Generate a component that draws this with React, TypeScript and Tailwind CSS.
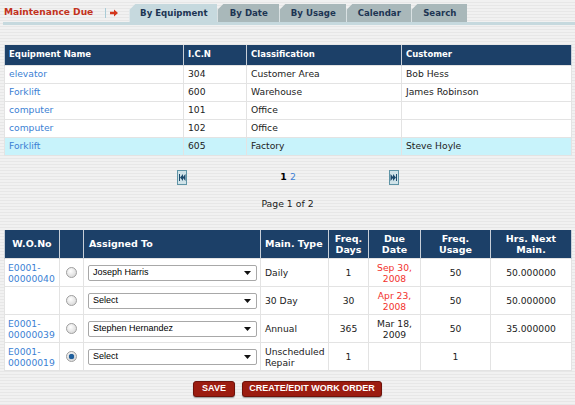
import React from "react";

const stripes =
  "bg-[repeating-linear-gradient(to_bottom,#f1f1f1_0px,#f1f1f1_2px,#e7e7e7_2px,#e7e7e7_3px)]";

const tabs = [
  { label: "By Equipment", w: "w-[88px]", active: true },
  { label: "By Date", w: "w-[62px]" },
  { label: "By Usage", w: "w-[67px]" },
  { label: "Calendar", w: "w-[65px]" },
  { label: "Search", w: "w-[56px]" },
];

const equipment = [
  { name: "elevator", icn: "304", cls: "Customer Area", customer: "Bob Hess" },
  { name: "Forklift", icn: "600", cls: "Warehouse", customer: "James Robinson" },
  { name: "computer", icn: "101", cls: "Office", customer: "" },
  { name: "computer", icn: "102", cls: "Office", customer: "" },
  { name: "Forklift", icn: "605", cls: "Factory", customer: "Steve Hoyle", hl: true },
];

const orders = [
  { wo: "E0001-00000040", who: "Joseph Harris", type: "Daily", days: "1", due: ["Sep 30,", "2008"], late: true, usage: "50", hrs: "50.000000" },
  { wo: "", who: "Select", type: "30 Day", days: "30", due: ["Apr 23,", "2008"], late: true, usage: "50", hrs: "50.000000" },
  { wo: "E0001-00000039", who: "Stephen Hernandez", type: "Annual", days: "365", due: ["Mar 18,", "2009"], usage: "50", hrs: "35.000000" },
  { wo: "E0001-00000019", who: "Select", type: "Unscheduled Repair", days: "1", due: [], usage: "1", hrs: "", checked: true },
];

function PageIcon({ dir }: { dir: "first" | "last" }) {
  return (
    <svg width="10" height="15" viewBox="0 0 10 15">
      <rect x="0.5" y="0.5" width="9" height="14" fill="#cfe2e8" stroke="#5f94a6" />
      {dir === "first" ? (
        <g fill="#1d4a6c">
          <rect x="2" y="4" width="1" height="7" />
          <polygon points="6,4 3,7.5 6,11" />
          <polygon points="8.5,4 5.5,7.5 8.5,11" />
        </g>
      ) : (
        <g fill="#1d4a6c">
          <rect x="7" y="4" width="1" height="7" />
          <polygon points="4,4 7,7.5 4,11" />
          <polygon points="1.5,4 4.5,7.5 1.5,11" />
        </g>
      )}
    </svg>
  );
}

function Radio({ checked }: { checked?: boolean }) {
  return (
    <span className="mx-auto flex h-[11px] w-[11px] items-center justify-center rounded-full border border-[#a0a0a0] bg-[radial-gradient(circle_at_40%_35%,#ffffff,#cfcfcf)]">
      {checked && <span className="h-[5px] w-[5px] rounded-full bg-[#1d5f9e] shadow-[0_0_1px_#0a3a6a]" />}
    </span>
  );
}

function Select({ value }: { value: string }) {
  return (
    <div className="flex h-[16px] w-[169px] items-center justify-between rounded-[2px] border border-[#a8a8a8] bg-white pl-[4px] pr-[5px] font-['Liberation_Sans',Arial,sans-serif] text-[9px] text-black">
      <span>{value}</span>
      <svg width="7" height="4" viewBox="0 0 7 4">
        <polygon points="0,0 7,0 3.5,4" fill="#111" />
      </svg>
    </div>
  );
}

export default function App() {
  return (
    <div className={`h-[405px] w-[575px] overflow-hidden ${stripes} font-['DejaVu_Sans',Verdana,sans-serif]`}>
      {/* tab strip */}
      <div className="ml-[3px] flex h-[25px] items-stretch border-b-[3px] border-[#c6d9de]">
        <div className="flex items-center pl-[1px] pt-[3px]">
          <span className="text-[9.1px] font-bold text-[#c3321c]">Maintenance Due</span>
          <span className="ml-[12px] h-[10px] w-[1px] bg-[#a9cbd6]" />
          <svg className="ml-[4px]" width="8" height="8" viewBox="0 0 8 8">
            <polygon points="0,2.8 4,2.8 4,0.5 8,4 4,7.5 4,5.2 0,5.2" fill="#d3361c" />
          </svg>
        </div>
        <div className="ml-[11px] flex items-end">
          {tabs.map((t) => (
            <div
              key={t.label}
              className={`${t.w} flex h-[18px] items-center justify-center border-l border-[#e4ecee] text-[8.6px] font-bold text-[#1d3553] [clip-path:polygon(6px_0,100%_0,100%_100%,0_100%,0_6px)] ${
                t.active ? "bg-[#c6d9de]" : "bg-[#a9b8ba]"
              }`}
            >
              {t.label}
            </div>
          ))}
        </div>
      </div>

      {/* equipment table */}
      <table className="ml-[4px] mt-[20px] w-[567px] table-fixed border-collapse text-[9.2px] text-[#222]">
        <colgroup>
          <col className="w-[179px]" />
          <col className="w-[63px]" />
          <col className="w-[155px]" />
          <col className="w-[170px]" />
        </colgroup>
        <thead>
          <tr className="h-[20px] bg-[#1c4068] text-left text-[8.5px] font-bold text-white">
            {["Equipment Name", "I.C.N", "Classification", "Customer"].map((h) => (
              <th key={h} className="border-x border-[#c7cfd8] pl-[4px] font-bold">
                {h}
              </th>
            ))}
          </tr>
        </thead>
        <tbody>
          {equipment.map((r, i) => (
            <tr key={i} className={`h-[18px] ${r.hl ? "bg-[#c8f3fb]" : "bg-white"}`}>
              <td className="border border-[#e3e3e3] pl-[4px] text-[#3b7fd4]">{r.name}</td>
              <td className="border border-[#e3e3e3] pl-[4px]">{r.icn}</td>
              <td className="border border-[#e3e3e3] pl-[4px]">{r.cls}</td>
              <td className="border border-[#e3e3e3] pl-[4px]">{r.customer}</td>
            </tr>
          ))}
        </tbody>
      </table>

      {/* pagination */}
      <div className="mt-[14px] flex justify-center pl-[1px]">
        <div className="flex h-[15px] w-[223px] items-center justify-between">
          <PageIcon dir="first" />
          <span className="text-[9.3px] font-bold text-black">
            1 <span className="font-normal text-[#3b7fd4]">2</span>
          </span>
          <PageIcon dir="last" />
        </div>
      </div>
      <div className="mt-[13px] text-center text-[9.3px] leading-[12px] text-[#222]">Page 1 of 2</div>

      {/* work orders */}
      <table className="ml-[4px] mt-[20px] w-[567px] table-fixed border-collapse text-[9.2px] text-[#222]">
        <colgroup>
          <col className="w-[55px]" />
          <col className="w-[24px]" />
          <col className="w-[177px]" />
          <col className="w-[68px]" />
          <col className="w-[40px]" />
          <col className="w-[52px]" />
          <col className="w-[70px]" />
          <col className="w-[81px]" />
        </colgroup>
        <thead>
          <tr className="h-[29px] bg-[#1c4068] text-[9.5px] font-bold leading-[11px] text-white">
            <th className="border-x border-[#c7cfd8] text-center">W.O.No</th>
            <th className="border-x border-[#c7cfd8]" />
            <th className="border-x border-[#c7cfd8] pl-[5px] text-left">Assigned To</th>
            <th className="border-x border-[#c7cfd8] pl-[4px] text-left">Main. Type</th>
            <th className="border-x border-[#c7cfd8] text-center">
              Freq.
              <br />
              Days
            </th>
            <th className="border-x border-[#c7cfd8] text-center">
              Due
              <br />
              Date
            </th>
            <th className="border-x border-[#c7cfd8] text-center">
              Freq.
              <br />
              Usage
            </th>
            <th className="border-x border-[#c7cfd8] text-center">
              Hrs. Next
              <br />
              Main.
            </th>
          </tr>
        </thead>
        <tbody>
          {orders.map((r, i) => (
            <tr key={i} className="h-[28px] bg-white leading-[11px]">
              <td className="border border-[#e3e3e3] pl-[3px] text-[#3b7fd4]">
                {r.wo && (
                  <>
                    {r.wo.split("-")[0]}-
                    <br />
                    {r.wo.split("-")[1]}
                  </>
                )}
              </td>
              <td className="border border-[#e3e3e3]">
                <Radio checked={r.checked} />
              </td>
              <td className="border border-[#e3e3e3] pl-[4px]">
                <Select value={r.who} />
              </td>
              <td className="border border-[#e3e3e3] pl-[4px]">{r.type}</td>
              <td className="border border-[#e3e3e3] text-center">{r.days}</td>
              <td className={`border border-[#e3e3e3] text-center ${r.late ? "text-[#f2312d]" : ""}`}>
                {r.due.length > 0 && (
                  <>
                    {r.due[0]}
                    <br />
                    {r.due[1]}
                  </>
                )}
              </td>
              <td className="border border-[#e3e3e3] text-center">{r.usage}</td>
              <td className="border border-[#e3e3e3] text-center">{r.hrs}</td>
            </tr>
          ))}
        </tbody>
      </table>

      {/* actions */}
      <div className="mt-[10px] flex justify-center gap-[7px] font-['Liberation_Sans',Arial,sans-serif] text-[9px] font-bold text-white">
        <button className="h-[16px] w-[42px] rounded-[3px] border border-[#6e120a] bg-[#9c1c10] shadow-[0_1px_1px_rgba(0,0,0,0.35)]">
          SAVE
        </button>
        <button className="h-[16px] w-[140px] rounded-[3px] border border-[#6e120a] bg-[#9c1c10] shadow-[0_1px_1px_rgba(0,0,0,0.35)]">
          CREATE/EDIT WORK ORDER
        </button>
      </div>
    </div>
  );
}
